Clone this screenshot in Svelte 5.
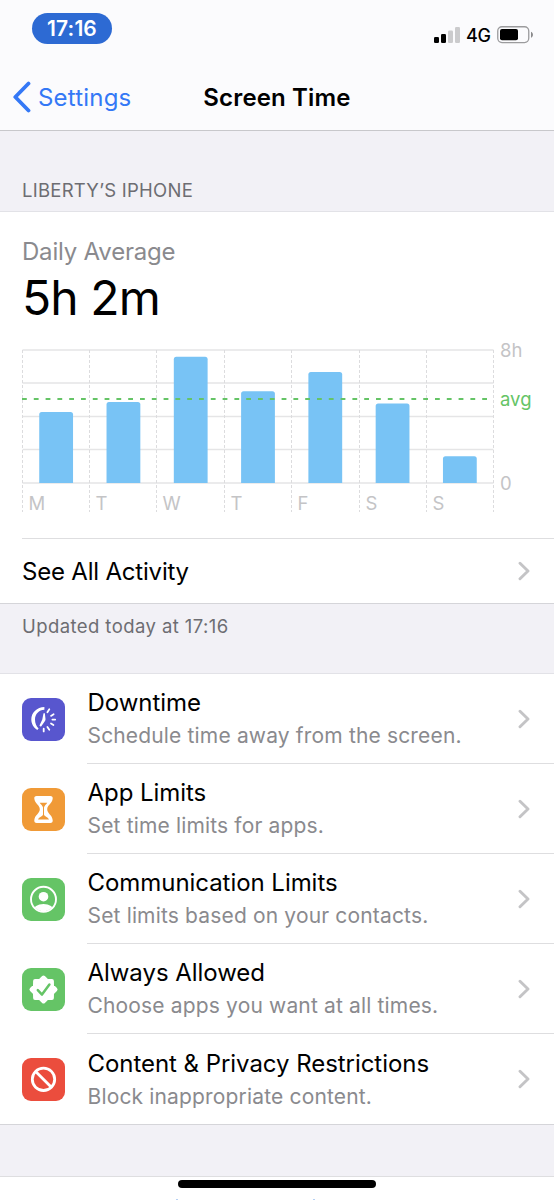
<script>
  const days = [
    { label: 'M', top: 72 },
    { label: 'T', top: 62 },
    { label: 'W', top: 16.7 },
    { label: 'T', top: 51.2 },
    { label: 'F', top: 32 },
    { label: 'S', top: 63.5 },
    { label: 'S', top: 116.2 }
  ];

  const chartLeft = 22.5;
  const chartRight = 493.5;
  const baseline = 143;
  const step = (chartRight - chartLeft) / days.length;
  const barWidth = 33.8;
  const gridLines = [10, 43, 76.5, 109.5, 143];
  const dividers = [22.5, 89.5, 156.5, 224.5, 291.5, 359.5, 426.5, 493.5];

  const options = [
    { icon: 'downtime', color: '#5856ce', title: 'Downtime', detail: 'Schedule time away from the screen.' },
    { icon: 'hourglass', color: '#f09a37', title: 'App Limits', detail: 'Set time limits for apps.' },
    { icon: 'person', color: '#65c466', title: 'Communication Limits', detail: 'Set limits based on your contacts.' },
    { icon: 'check', color: '#65c466', title: 'Always Allowed', detail: 'Choose apps you want at all times.' },
    { icon: 'block', color: '#eb4d3d', title: 'Content & Privacy Restrictions', detail: 'Block inappropriate content.' }
  ];

  function barPath(i, top) {
    const x = chartLeft + step * i + (step - barWidth) / 2;
    const r = 2.5;
    return `M${x} ${baseline}V${top + r}q0 ${-r} ${r} ${-r}h${barWidth - 2 * r}q${r} 0 ${r} ${r}V${baseline}z`;
  }
</script>

{#snippet chevron()}
  <svg class="chevron" width="12" height="20" viewBox="0 0 12 20">
    <path d="M2 2.2 10 10 2 17.8" />
  </svg>
{/snippet}

<div class="screen">
  <header>
    <div class="status">
      <span class="clock">17:16</span>
      <div class="indicators">
        <svg width="26" height="16" viewBox="0 0 26 16">
          <rect x="0" y="10" width="5" height="6" rx="1.3" />
          <rect x="7" y="7" width="5" height="9" rx="1.3" />
          <rect x="14" y="3.5" width="5" height="12.5" rx="1.3" fill="#cbcbcd" />
          <rect x="21" y="0" width="5" height="16" rx="1.3" fill="#cbcbcd" />
        </svg>
        <span class="network">4G</span>
        <svg width="36" height="18" viewBox="0 0 36 18">
          <rect x="0.75" y="0.75" width="31" height="15.8" rx="4.2" fill="none" stroke="#9b9b9d" stroke-width="1.3" />
          <rect x="3" y="3" width="18" height="11.3" rx="2" />
          <path d="M34 5.8c2.6.8 2.6 5.2 0 6z" fill="#8a8a8c" />
        </svg>
      </div>
    </div>
    <nav>
      <a class="back" href="#settings">
        <svg width="19" height="32" viewBox="0 0 19 32">
          <path d="M16.5 2.5 3.3 16 16.5 29.5" />
        </svg>
        <span>Settings</span>
      </a>
      <h1>Screen Time</h1>
    </nav>
  </header>

  <h2>LIBERTY’S IPHONE</h2>

  <section class="usage">
    <p class="caption">Daily Average</p>
    <p class="total">5h 2m</p>
    <svg class="chart" width="554" height="198" viewBox="0 0 554 198">
      {#each gridLines as y}
        <line class="grid" x1={chartLeft} x2={chartRight} y1={y} y2={y} />
      {/each}
      {#each dividers as x}
        <line class="divider" x1={x} x2={x} y1="10" y2="172" />
      {/each}
      {#each days as day, i}
        <path class="bar" d={barPath(i, day.top)} />
        <text class="label" x={dividers[i] + 6} y="170">{day.label}</text>
      {/each}
      <line class="average" x1="22" x2="489" y1="59" y2="59" />
      <text class="label" x="500" y="17">8h</text>
      <text class="label avg" x="500" y="66">avg</text>
      <text class="label" x="500" y="150">0</text>
    </svg>
    <div class="activity">
      <span>See All Activity</span>
      {@render chevron()}
    </div>
  </section>

  <p class="updated">Updated today at 17:16</p>

  <ul>
    {#each options as option}
      <li>
        <svg class="icon" width="43" height="43" viewBox="0 0 43 43" style:background={option.color}>
          {#if option.icon === 'downtime'}
            <path
              fill="#fff"
              d="M22.4 8.9v2.9c-5.5.2-9.4 4.3-9.4 9.7 0 3.8 1.3 6.6 3.6 9.1l-1.3 1.5C11.6 29.700 9.300 26 9.300 21.300 9.300 14.500 15 8.900 22.400 8.900z"
            />
            <path fill="#fff" d="M21.4 15.700c.2-.9 1.400-.9 1.500 0l.6 5.300c.1.800-.1 1.300-.5 1.900l-3.500 5c-.9 1.100-2.300.3-1.800-.9l2.600-5.600z" />
            <path
              d="M25.400 14.200 27.300 11.200M29 17.900 31.600 16.300M30.400 21.600H33.200M29 25.500 31.400 27M25.400 29 27.300 31.800M21.700 30.700V33.400"
              fill="none"
              stroke="#fff"
              stroke-width="1.800"
              stroke-linecap="round"
            />
          {:else if option.icon === 'hourglass'}
            <path
              fill="#fff"
              d="M14.7 8h13.6c1.8 0 2.6 1 2.4 2.5-.4 5.3-5.5 6.4-5.5 10.8s5.1 5.6 5.5 11c.2 1.6-.6 2.7-2.4 2.7H14.7c-1.8 0-2.6-1.1-2.4-2.7.4-5.4 5.5-6.600 5.500-11s-5.100-5.500-5.500-10.800C12.100 9 12.900 8 14.700 8z"
            />
            <path fill={option.color} d="M17.700 14.800h7.600c-1.100 2-2.900 2.600-3.300 4.800v7c.4 2.100 3.700 2.400 5 4.800H16c1.300-2.400 4.600-2.700 5-4.800v-7c-.4-2.200-2.200-2.800-3.300-4.800z" />
          {:else if option.icon === 'person'}
            <clipPath id="face"><circle cx="21.5" cy="21.3" r="11.8" /></clipPath>
            <circle cx="21.5" cy="21.3" r="12.5" fill="none" stroke="#fff" stroke-width="1.9" />
            <circle cx="21.5" cy="18.7" r="4.8" fill="#fff" />
            <ellipse cx="21.5" cy="32.7" rx="10.5" ry="6.8" fill="#fff" clip-path="url(#face)" />
          {:else if option.icon === 'check'}
            <path
              fill="#fff"
              stroke="#fff"
              stroke-width="4"
              stroke-linejoin="round"
              d="M21.5 9.5 25 12.9 29.9 13.1 30 18 33.5 21.5 30 25 29.9 29.9 25 30.1 21.5 33.5 18 30.1 13.1 29.9 13 25 9.5 21.5 13 18 13.1 13.1 18 12.9z"
            />
            <path d="M15.8 22.2 20 26.6 27.4 16.5" fill="none" stroke={option.color} stroke-width="2.5" stroke-linecap="round" stroke-linejoin="round" />
          {:else}
            <g fill="none" stroke="#fff" stroke-width="2.8">
              <circle cx="21.5" cy="21.3" r="11.2" />
              <path d="M13.6 13.4 29.4 29.2" />
            </g>
          {/if}
        </svg>
        <div class="body">
          <div class="text">
            <span class="title">{option.title}</span>
            <span class="detail">{option.detail}</span>
          </div>
          {@render chevron()}
        </div>
      </li>
    {/each}
  </ul>

  <footer>
    <div class="home"></div>
    <svg width="554" height="1" viewBox="0 0 554 1">
      <path d="M176 0h2v1h-2zM313 0h2v1h-2z" fill="#b5d0f3" />
    </svg>
  </footer>
</div>

<style>
  :global(body) {
    background: #f2f1f6;
  }

  .screen {
    width: 554px;
    height: 1200px;
    overflow: hidden;
    display: flex;
    flex-direction: column;
    background: #f2f1f6;
    color: #000;
    font-family: Inter, 'Liberation Sans', sans-serif;
    font-size: 24px;
    letter-spacing: -0.2px;
  }

  h1,
  h2,
  p,
  ul {
    margin: 0;
    padding: 0;
    font-weight: 400;
  }

  header {
    box-sizing: border-box;
    height: 131px;
    flex: none;
    background: #fbfbfd;
    border-bottom: 1px solid #c8c8cb;
  }

  .status {
    display: flex;
    justify-content: space-between;
    align-items: flex-start;
    padding: 13px 21px 0 32px;
    height: 52px;
  }

  .clock {
    width: 80px;
    height: 31px;
    border-radius: 16px;
    background: #2d6ad3;
    color: #fff;
    font-size: 21px;
    font-weight: 600;
    line-height: 31px;
    text-align: center;
    letter-spacing: 0.1px;
  }

  .indicators {
    display: flex;
    align-items: center;
    padding-top: 12px;
  }

  .network {
    width: 24px;
    margin: 0 7px 0 6px;
    padding-top: 2px;
    font-size: 18px;
    font-weight: 500;
    line-height: 18px;
    letter-spacing: -0.3px;
  }

  nav {
    display: grid;
    grid-template-columns: 1fr auto 1fr;
    align-items: center;
    height: 64px;
  }

  .back {
    display: flex;
    align-items: center;
    gap: 7px;
    padding-left: 12px;
    color: #3478f6;
    letter-spacing: 0.2px;
    text-decoration: none;
  }

  .back path {
    fill: none;
    stroke: #3478f6;
    stroke-width: 3.8;
    stroke-linecap: round;
    stroke-linejoin: round;
  }

  h1 {
    font-size: 24px;
    font-weight: 600;
    letter-spacing: 0.15px;
  }

  h2 {
    box-sizing: border-box;
    height: 81px;
    flex: none;
    padding: 48px 22px 0;
    border-bottom: 1px solid #e2e2e7;
    color: #6d6d72;
    font-size: 18.5px;
    letter-spacing: 0.25px;
    line-height: 23px;
  }

  .usage {
    height: 391px;
    flex: none;
    background: #fff;
    border-bottom: 1px solid #d5d5d9;
  }

  .caption {
    padding: 25px 22px 0;
    color: #8a8a8e;
    line-height: 30px;
  }

  .total {
    padding-left: 22px;
    height: 73px;
    font-size: 48px;
    letter-spacing: -0.9px;
    line-height: 61px;
  }

  .chart {
    display: block;
  }

  .grid {
    stroke: #e5e5e6;
    stroke-width: 1.3;
  }

  .divider {
    stroke: #dcdcde;
    stroke-dasharray: 3 2;
  }

  .bar {
    fill: #78c3f5;
  }

  .average {
    stroke: #65c466;
    stroke-width: 2;
    stroke-dasharray: 4.8 7;
  }

  .label {
    fill: #c4c4c6;
    font-size: 18.5px;
    letter-spacing: 0;
  }

  .avg {
    fill: #65c466;
  }

  .activity {
    display: flex;
    justify-content: space-between;
    align-items: center;
    height: 64px;
    margin-left: 22px;
    padding-right: 24px;
    border-top: 1px solid #dedee0;
  }

  .chevron {
    flex: none;
  }

  .chevron path {
    fill: none;
    stroke: #c4c4c6;
    stroke-width: 2.9;
    stroke-linecap: round;
    stroke-linejoin: round;
  }

  .updated {
    box-sizing: border-box;
    height: 70px;
    flex: none;
    padding: 11px 22px;
    border-bottom: 1px solid #e2e2e7;
    color: #6d6d72;
    font-size: 18.5px;
    letter-spacing: 0.42px;
    line-height: 23px;
  }

  ul {
    flex: none;
    list-style: none;
    background: #fff;
    border-bottom: 1px solid #d5d5d9;
  }

  li {
    display: flex;
    align-items: center;
    height: 90.1px;
    padding-left: 22px;
  }

  .icon {
    flex: none;
    border-radius: 9px;
  }

  .body {
    box-sizing: border-box;
    display: flex;
    flex: 1;
    justify-content: space-between;
    align-items: center;
    height: 90.1px;
    margin-left: 22px;
    padding-right: 24px;
    border-bottom: 1px solid #dedee0;
  }

  li:last-child .body {
    border-bottom: 0;
  }

  .text {
    display: flex;
    flex-direction: column;
    padding: 2px 0 0 0.5px;
  }

  .title {
    letter-spacing: -0.05px;
    line-height: 32px;
  }

  .detail {
    color: #8a8a8e;
    font-size: 21px;
    letter-spacing: 0.16px;
    line-height: 33px;
  }

  footer {
    display: flex;
    flex-direction: column;
    align-items: center;
    justify-content: space-between;
    box-sizing: border-box;
    height: 24px;
    margin-top: auto;
    padding-top: 3px;
    background: #fff;
    border-top: 1px solid #dedee0;
  }

  .home {
    width: 198px;
    height: 8px;
    border-radius: 4px;
    background: #000;
  }
</style>
